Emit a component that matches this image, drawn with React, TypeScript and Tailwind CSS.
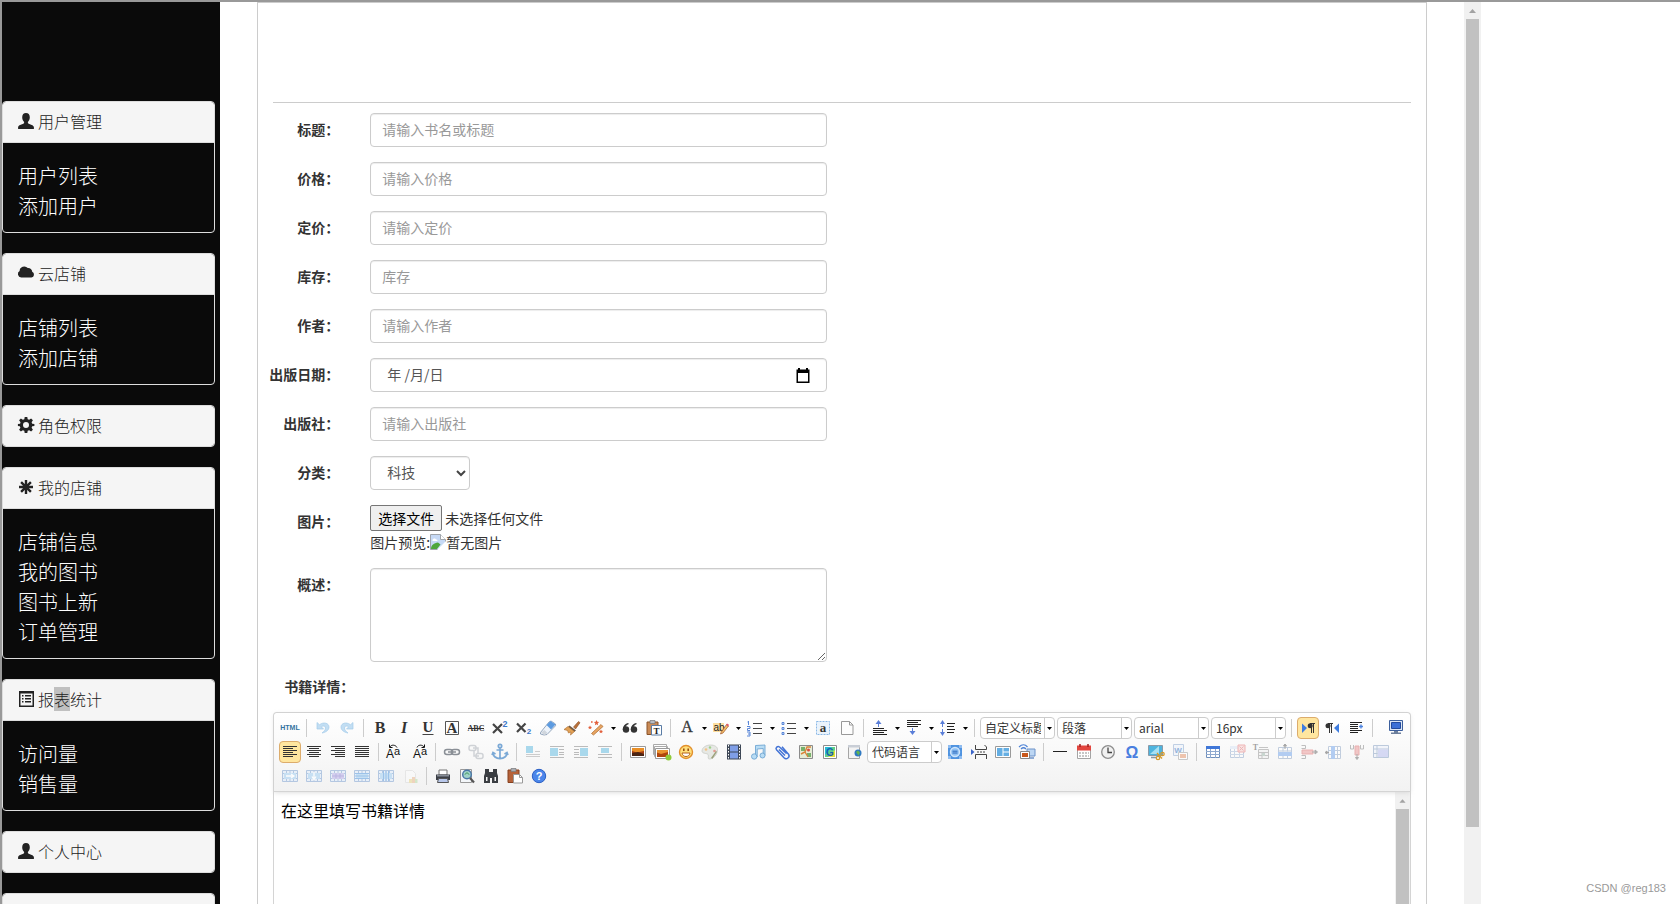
import React, { useState } from 'react';

type GlyphName = 'user' | 'cloud' | 'cog' | 'asterisk' | 'listAlt';

const glyphs: Record<GlyphName, React.ReactNode> = {
  user: (
    <path d="M8 0C5.6 0 4.2 1.5 4.2 4.3c0 2 .8 3.7 1.9 4.7v1.3c-1 .9-5.3 1.6-6 3.7V16h15.800v-2c-.7-2.100-5-2.800-6-3.700V9c1.100-1 1.900-2.700 1.900-4.700C11.800 1.500 10.400 0 8 0z" />
  ),
  cloud: <path d="M3.200 12.500A3.500 3.500 0 0 1 1.600 6 4.700 4.700 0 0 1 9.800 3 3.900 3.900 0 0 1 14.200 6.800 3 3 0 0 1 13.500 12.500z" />,
  cog: (
    <path
      fillRule="evenodd"
      d="M6.700 0h2.600l.4 2.200 1.500.6 1.900-1.300 1.800 1.800-1.300 1.900.6 1.500 2.200.4v1.800l-2.200.4-.6 1.500 1.300 1.900-1.800 1.800-1.900-1.300-1.500.6-.4 2.200H6.700l-.4-2.200-1.500-.6-1.900 1.300-1.800-1.800 1.300-1.900-.6-1.500L-.1 8.900V7.100l2.200-.4.400-1.500L1.100 3.300l1.800-1.800 1.900 1.300 1.500-.6zM8 5a3 3 0 1 0 0 6 3 3 0 0 0 0-6z"
    />
  ),
  asterisk: (
    <g stroke="currentColor" strokeWidth="2.400">
      <path d="M8 1v14M1 8h14M3.100 3.100l9.800 9.800M12.900 3.100l-9.800 9.800" />
    </g>
  ),
  listAlt: (
    <>
      <path fillRule="evenodd" d="M1 0h15v16H1zM2.500 2.500v12h12v-12z" />
      <path d="M4 4h1.500v1.500H4zM4 7h1.500v1.500H4zM4 10h1.500v1.500H4zM7 4h6v1.500H7zM7 7h6v1.500H7zM7 10h6v1.500H7z" />
    </>
  ),
};

const Glyph = ({ name }: { name: GlyphName }) => (
  <svg viewBox="0 0 16 16" className="w-4 h-4 shrink-0 overflow-visible" fill="currentColor">
    {glyphs[name]}
  </svg>
);

interface Menu {
  icon: GlyphName;
  title?: React.ReactNode;
  items: string[];
}

const menus: Menu[] = [
  { icon: 'user', title: '用户管理', items: ['用户列表', '添加用户'] },
  { icon: 'cloud', title: '云店铺', items: ['店铺列表', '添加店铺'] },
  { icon: 'cog', title: '角色权限', items: [] },
  { icon: 'asterisk', title: '我的店铺', items: ['店铺信息', '我的图书', '图书上新', '订单管理'] },
  {
    icon: 'listAlt',
    title: (
      <>
        报<mark className="bg-[#c0c0c0] text-inherit">表</mark>统计
      </>
    ),
    items: ['访问量', '销售量'],
  },
  { icon: 'user', title: '个人中心', items: [] },
  { icon: 'cog', items: [] },
];

const Sidebar = () => (
  <aside className="w-[218px] shrink-0 bg-[#0a0a0a] pt-[99px] pr-[5px] overflow-hidden font-light">
    {menus.map((menu, i) => (
      <div key={i} className="mb-5 border border-[#ddd] rounded overflow-hidden">
        <h3 className="h-10 px-[15px] pb-[3px] flex items-center gap-1 bg-[#f5f5f5] text-[#222] text-base leading-[18px]">
          <Glyph name={menu.icon} />
          {menu.title && <span>{menu.title}</span>}
        </h3>
        {menu.items.length > 0 && (
          <ul className="border-t border-[#ddd] px-[15px] pt-[18px] pb-[11px] text-xl leading-[30px] text-white">
            {menu.items.map((item) => (
              <li key={item}>
                <a href="#">{item}</a>
              </li>
            ))}
          </ul>
        )}
      </div>
    ))}
  </aside>
);

// ---- toolbar icons, all on a 20x20 grid ----

const T = (props: React.SVGProps<SVGTextElement>) => <text textAnchor="middle" fill="#333" {...props} />;

const serif = '"Liberation Serif", serif';
const sans = '"Liberation Sans", sans-serif';

const Grid = ({ x = 3, y = 4, head = '#cfe0f5' }: { x?: number; y?: number; head?: string }) => (
  <>
    <path d={`M${x + 0.5} ${y + 0.5}h13v11h-13z`} fill="#fff" stroke="#6f8fbc" />
    <path d={`M${x} ${y}h14v3h-14z`} fill={head} />
    <path d={`M${x} ${y + 5.5}h14M${x} ${y + 8.5}h14M${x + 4.5} ${y + 3}v9M${x + 9.5} ${y + 3}v9`} stroke="#8fa9cf" />
  </>
);

const Floated = ({ x, center }: { x: number; center?: boolean }) => (
  <>
    <path d="M3 4.500h14M3 15.500h14" stroke="#bbb" />
    {!center && <path d={x < 8 ? 'M12 7.500h5M12 10.500h5M12 12.500h5' : 'M3 7.500h5M3 10.500h5M3 12.500h5'} stroke="#bbb" />}
    {center && <path d="M3 12.500h14" stroke="#bbb" />}
    <path d={`M${x} 6h8v${center ? 5 : 8}h-8z`} fill="#a9d8ec" />
  </>
);

const FilmTable = ({ children, tone = '#b8d9f3' }: { children?: React.ReactNode; tone?: string }) => (
  <g opacity=".75">
    <path d="M2.500 4.500h15v11h-15z" fill="#e4eefa" stroke="#9fb9db" />
    <path d="M2.500 7.500h15M2.500 12.500h15M6.500 4.500v11M13.500 4.500v11M10 4.500v11" stroke="#9fb9db" />
    <path d="M4 7h12v6H4z" fill={tone} />
    {children}
  </g>
);

const icons: Record<string, React.ReactNode> = {
  html: (
    <T x="10" y="12" fontSize="7" fontWeight="bold" fontFamily={sans} fill="#33729f">
      HTML
    </T>
  ),
  undo: <path d="M4 4.500v6.500h6.500L8.300 8.800c2-1.500 4.200-.8 4.200 1.200 0 1.800-1.600 3.600-3.500 5 4.500-.8 7-3.200 7-6 0-3.800-5.200-5.500-9.500-2.300z" fill="#c2def3" stroke="#a5cbe9" strokeWidth=".7" />,
  redo: <path d="M16 4.500v6.500H9.500l2.200-2.200C9.700 7.300 7.500 8 7.500 10c0 1.800 1.600 3.600 3.500 5-4.500-.8-7-3.200-7-6 0-3.800 5.200-5.500 9.500-2.300z" fill="#c2def3" stroke="#a5cbe9" strokeWidth=".7" />,
  bold: <T x="10" y="15" fontSize="16" fontWeight="bold" fontFamily={serif}>B</T>,
  italic: <T x="10" y="15" fontSize="16" fontWeight="bold" fontStyle="italic" fontFamily={serif}>I</T>,
  underline: (
    <>
      <T x="10" y="14" fontSize="15" fontWeight="bold" fontFamily={serif}>U</T>
      <path d="M4.500 16.500h11" stroke="#444" />
    </>
  ),
  border: (
    <>
      <path d="M3.500 3.500h13v13h-13z" fill="none" stroke="#555" />
      <T x="10" y="15" fontSize="15" fontWeight="bold" fontFamily={serif}>A</T>
    </>
  ),
  strike: (
    <>
      <T x="10" y="13" fontSize="8" fontWeight="bold" fontFamily={serif}>ABC</T>
      <path d="M2 10.500h16" stroke="#333" />
    </>
  ),
  sup: (
    <>
      <path d="M3 6l9 9M12 6l-9 9" stroke="#444" strokeWidth="2.200" />
      <T x="15" y="9" fontSize="9" fontWeight="bold" fontFamily={sans} fill="#3d78c9">2</T>
    </>
  ),
  sub: (
    <>
      <path d="M3 5.500l8.500 8.500M11.500 5.500L3 14" stroke="#444" strokeWidth="2.200" />
      <T x="15" y="16" fontSize="8" fontWeight="bold" fontFamily={sans} fill="#3d78c9">2</T>
    </>
  ),
  eraser: (
    <>
      <path d="M2.500 14.500L11 4l2-1 4.500 3v1.800L9 16.500l-3 .5-3.500-1z" fill="#eef4fb" stroke="#7f93ad" strokeWidth=".8" />
      <path d="M8.500 7L12.500 3l5 3.500-4.500 5z" fill="#5d9be0" />
      <path d="M3 14.500L6.500 12l3 3-3 2z" fill="#d0d6dd" />
    </>
  ),
  brush: (
    <>
      <path d="M11.500 9L16.500 3.500l1.500 1.200L13.500 11z" fill="#b9713a" stroke="#8a4c20" strokeWidth=".6" />
      <path d="M7.500 7.500l6.500 5-2 1.500-6-5z" fill="#6b5a49" />
      <path d="M6 8.500L2 11.500l3.500 1 1 2.500 2.500-1-.5 3 4-3.500z" fill="#e2a256" stroke="#a8662a" strokeWidth=".6" />
    </>
  ),
  wand: (
    <>
      <path d="M5.500 15.500l9.500-9 2 2-9.500 8.500z" fill="#e9a663" stroke="#a8662a" strokeWidth=".7" />
      <path d="M10.500 2l.8 1.800 1.900.3-1.500 1.200.4 1.900-1.600-1-1.600 1 .4-1.900L7.800 4.100l1.900-.3zM4 7.500l.6 1.300 1.400.2-1 .9.300 1.400L4 10.600l-1.300.7.300-1.400-1-.9 1.400-.2zM15 11.500l.6 1.300 1.400.2-1 .9.300 1.400-1.300-.7-1.300.7.300-1.400-1-.9 1.400-.2zM5 3.200h1.600v1.600H5z" fill="#e2603c" />
    </>
  ),
  quote: (
    <g fill="#333">
      <circle cx="6" cy="11.500" r="3.200" />
      <circle cx="14" cy="11.500" r="3.200" />
      <path d="M2.800 12c0-4 2-6.500 5.700-7v1.200C6 7 5.200 9 5.300 11zM10.800 12c0-4 2-6.500 5.700-7v1.200c-2.500.8-3.300 2.800-3.200 4.800z" />
    </g>
  ),
  pasteplain: (
    <>
      <path d="M3 4h11v12.500H3z" fill="#c98a55" stroke="#8a5328" />
      <path d="M6 2.500h5v3H6z" fill="#b8bcc2" stroke="#777" strokeWidth=".7" />
      <path d="M7.500 7.500h10v9.500h-10z" fill="#fff" stroke="#5a7ca5" />
      <T x="12.500" y="15.500" fontSize="9" fontWeight="bold" fontFamily={serif} fill="#222">T</T>
    </>
  ),
  forecolor: <T x="10" y="14" fontSize="16" fontFamily={serif} stroke="#444" strokeWidth=".3">A</T>,
  backcolor: (
    <>
      <path d="M2 5h11v9H2z" fill="#fddfa0" />
      <T x="8" y="13" fontSize="10" fontFamily={sans} fill="#222">ab</T>
      <path d="M10 14.500l5.500-8 2 1.500-5.500 7-2.500 1z" fill="#f3c069" stroke="#a0552a" strokeWidth=".7" />
      <path d="M15 7l1-1.500 2 1.300-1 1.700z" fill="#e05a6a" />
    </>
  ),
  ol: (
    <>
      <path d="M8 5.500h9M8 10.500h9M8 15.500h9" stroke="#444" />
      <path d="M3.500 3v4M2.500 4h1M2 8.500h3v2H2.500v2H5M2 14h3v4H2M3 16h2" stroke="#5a87d8" fill="none" />
    </>
  ),
  ul: (
    <>
      <path d="M8 5.500h9M8 10.500h9M8 15.500h9" stroke="#444" />
      <path d="M3 4.500h2v2H3zM3 9.500h2v2H3zM3 14.500h2v2H3z" fill="#cfe0fb" stroke="#5a87d8" />
    </>
  ),
  selectall: (
    <>
      <path d="M3.500 3.500h13v13h-13z" fill="#eaf3fc" stroke="#8ab8e6" strokeDasharray="2 1" />
      <T x="10" y="14" fontSize="13" fontWeight="bold" fontFamily={serif}>a</T>
    </>
  ),
  cleardoc: (
    <>
      <path d="M4.500 3.500h8l3.500 3.500v9.500H4.500z" fill="#fdfdfd" stroke="#999" />
      <path d="M12.500 3.500V7H16" fill="none" stroke="#999" />
    </>
  ),
  rowtop: (
    <>
      <path d="M3 10.500h11M3 12.500h14M3 14.500h11M3 16.500h14" stroke="#222" />
      <path d="M8.500 9V5" stroke="#5a7ed8" />
      <path d="M5.500 6l3-4 3 4z" fill="#5a7ed8" />
    </>
  ),
  rowbottom: (
    <>
      <path d="M3 2.500h14M3 4.500h11M3 6.500h14M3 8.500h11" stroke="#222" />
      <path d="M8.500 10v4" stroke="#5a7ed8" />
      <path d="M5.500 13l3 4 3-4z" fill="#5a7ed8" />
    </>
  ),
  lineheight: (
    <>
      <path d="M9 5.500h8M9 8.500h7M9 11.500h8M9 14.500h7" stroke="#222" />
      <path d="M4.500 5v11" stroke="#5a7ed8" strokeDasharray="4 2" />
      <path d="M2 6l2.500-4L7 6zM2 14l2.500 4L7 14z" fill="#5a7ed8" />
    </>
  ),
  ltr: (
    <>
      <path d="M4 5.500l5 4.500-5 5z" fill="#3f7de0" />
      <path d="M17 5.500h-5M13.500 5v10M15.500 5v10" stroke="#333" />
      <circle cx="12.200" cy="7.700" r="2.500" fill="#333" />
    </>
  ),
  rtl: (
    <>
      <path d="M17 5.500l-5 4.500 5 5z" fill="#3f7de0" />
      <path d="M11 5.500H6M7.500 5v10M9.500 5v10" stroke="#333" />
      <circle cx="6" cy="7.700" r="2.500" fill="#333" />
    </>
  ),
  indent: (
    <>
      <path d="M4 4.500h12M4 6.500h8M4 8.500h8M4 10.500h8M4 12.500h12M4 14.500h8" stroke="#222" />
      <path d="M13 8.500h4M15 6.500v4" stroke="#4f85e0" strokeWidth="1.400" />
    </>
  ),
  fullscreen: (
    <>
      <path d="M3.500 3.500h13v10h-13z" fill="#dce6f5" stroke="#3c5f9d" />
      <path d="M5.500 5.500h9v6h-9z" fill="#3b6fd6" stroke="#234a9c" />
      <path d="M8 14h4v1.500h3V17H5v-1.500h3z" fill="#6d7f9c" />
    </>
  ),
  left: <path d="M3 4.500h14M3 6.500h10M3 8.500h14M3 10.500h10M3 12.500h14M3 14.500h10" stroke="#333" />,
  center: <path d="M3 4.500h14M5 6.500h10M3 8.500h14M5 10.500h10M3 12.500h14M5 14.500h10" stroke="#333" />,
  right: <path d="M3 4.500h14M7 6.500h10M3 8.500h14M7 10.500h10M3 12.500h14M7 14.500h10" stroke="#333" />,
  justify: <path d="M3 4.500h14M3 6.500h14M3 8.500h14M3 10.500h14M3 12.500h14M3 14.500h14" stroke="#333" />,
  upper: (
    <>
      <T x="5" y="16" fontSize="12" fontFamily={sans} fill="#111">A</T>
      <T x="12" y="13" fontSize="11" fontFamily={sans} fill="#111">a</T>
      <path d="M5 5c1-2.500 5.500-2.500 7 .5M4.500 2.500v3h3" fill="none" stroke="#111" />
    </>
  ),
  lower: (
    <>
      <T x="8" y="16" fontSize="12" fontFamily={sans} fill="#111">A</T>
      <T x="15" y="13" fontSize="11" fontFamily={sans} fill="#111">a</T>
      <path d="M8 5.500c1-3 5.500-3 7-.5M15.500 2.500v3h-3" fill="none" stroke="#111" />
    </>
  ),
  link: (
    <g fill="none" stroke="#8a8f96" strokeWidth="1.500">
      <rect x="2.500" y="7.500" width="8" height="5" rx="2.500" />
      <rect x="9.500" y="7.500" width="8" height="5" rx="2.500" />
      <path d="M6 10h8" />
    </g>
  ),
  unlink: (
    <g fill="none" stroke="#cfd2d6" strokeWidth="1.500">
      <rect x="3" y="3.500" width="7" height="5" rx="2" />
      <rect x="10" y="11.500" width="7" height="5" rx="2" />
      <path d="M7 6h5v5M8 9v5h5" />
    </g>
  ),
  anchor: (
    <g fill="none" stroke="#7ba9d6" strokeWidth="1.700">
      <circle cx="10" cy="4" r="1.700" />
      <path d="M10 6v11M6.500 8h7M2.800 11c.7 4 3.500 5.500 7.200 5.700 3.700-.2 6.500-1.700 7.200-5.700M2 13l1-2.500L5.500 12M18 13l-1-2.500-2.500 1.500" />
    </g>
  ),
  imgnone: (
    <>
      <path d="M3 4h7v7H3z" fill="#a9d8ec" />
      <path d="M3 12.500h14M3 14.500h14M12 9.500h5" stroke="#ccc" />
    </>
  ),
  imgleft: <Floated x={3} />,
  imgright: <Floated x={9} />,
  imgcenter: <Floated x={6} center />,
  image: (
    <>
      <path d="M2.500 4.500h15v11h-15z" fill="#fff" stroke="#9a9a9a" />
      <path d="M4 6h12v8H4z" fill="#a53c10" />
      <path d="M4 6h12v3l-7 1.500L4 9z" fill="#e98e25" />
      <path d="M4 11l6-1 6 2v2H4z" fill="#4a2413" />
    </>
  ),
  images: (
    <>
      <path d="M1.500 2.500h13v10h-13zM2.500 4.500h13v10h-13z" fill="#fff" stroke="#aaa" />
      <path d="M3.500 6.500h14v10h-14z" fill="#fff" stroke="#9a9a9a" />
      <path d="M5 8h11v7H5z" fill="#b1460f" />
      <path d="M5 8h11v2l-7 2-4-1.500z" fill="#ea9430" />
      <circle cx="16.500" cy="15.500" r="3" fill="#8fcb3a" />
    </>
  ),
  emotion: (
    <>
      <circle cx="10" cy="10" r="6.500" fill="#ffdf7a" stroke="#e2902d" strokeWidth="1.400" />
      <path d="M7 6.500h1.600v2.500H7zM11.400 6.500H13v2.500h-1.600z" fill="#9c4e12" />
      <path d="M6 11h8c-.5 2.500-2 3.500-4 3.500S6.500 13.500 6 11z" fill="#fff" stroke="#b5631d" />
    </>
  ),
  scrawl: (
    <>
      <path d="M2 9c0-3.500 4-6 8.500-6 4 0 7 1.700 7 4.500 0 5-4 9.500-8 9.500-2.500 0-.5-3-1.500-4.500S2 12 2 9z" fill="#e6e8e4" stroke="#c3c6c0" strokeWidth=".7" />
      <circle cx="6" cy="7.500" r="1.300" fill="#f1c48a" />
      <circle cx="10" cy="5.500" r="1.200" fill="#9fd08c" />
      <circle cx="14.500" cy="9" r="1.300" fill="#e49a92" />
      <path d="M11 16l5-7 1 .8-4.500 7z" fill="#9ba07a" />
    </>
  ),
  video: (
    <>
      <path d="M3 2.500h14v15H3z" fill="#3d4756" />
      <path d="M6 3.500h8v6H6zM6 10.500h8v6H6z" fill="#7f9ee6" />
      <path d="M4.500 3v14M15.500 3v14" stroke="#fff" strokeDasharray="1.500 1.500" />
    </>
  ),
  music: (
    <g fill="#b8dcf4" stroke="#6fa6d2" strokeWidth=".9">
      <path d="M7.500 3.500L17 3v10.500h-1.800V6.500L9.200 7v8H7.500z" />
      <circle cx="6.200" cy="14.500" r="2.700" />
      <circle cx="14.500" cy="13.500" r="2.500" />
    </g>
  ),
  attach: (
    <path d="M14.500 11.500L7.500 5C5.700 3.500 3 5.800 4.500 7.800l7.500 8c2.500 2.500 6.500-.8 4.500-3.500L10 4.800M13 13.500L7 7.500" fill="none" stroke="#4474d6" strokeWidth="1.500" />
  ),
  map: (
    <>
      <path d="M3.500 3.500h13v13h-13z" fill="#e6edd6" stroke="#8c8c8c" />
      <path d="M5 5h4v4H5zM11 11h4v4h-4z" fill="#76b06c" />
      <path d="M5 12l4-2 2-5h4M9 10l3 5" fill="none" stroke="#d98438" strokeWidth="1.400" />
      <circle cx="12.500" cy="8" r="1.500" fill="#d94b3b" />
    </>
  ),
  gmap: (
    <>
      <path d="M3.500 3.500h13v13h-13z" fill="#fff" stroke="#8c8c8c" />
      <path d="M5 5h10v10H5z" fill="#5fd08a" />
      <path d="M5 5h7l-7 8z" fill="#27bcd6" />
      <path d="M15 8v7H8z" fill="#e8e03c" />
      <T x="10" y="14" fontSize="10" fontWeight="bold" fontFamily={sans} fill="#155fae">G</T>
    </>
  ),
  insertframe: (
    <>
      <path d="M4.500 3.500h11v13h-11z" fill="#f3f3f3" stroke="#a5a5a5" />
      <path d="M4 3h12v2.500H4z" fill="#c9ced6" />
      <circle cx="14" cy="11" r="3.500" fill="#2f79c2" />
      <path d="M12 10l2-1.500 2 2-1.500 3z" fill="#62b54f" />
    </>
  ),
  webapp: (
    <>
      <rect x="3" y="3" width="14" height="14" rx="2" fill="#4f93e0" />
      <path d="M3 3h3v3H3zM14 3h3v3h-3zM3 14h3v3H3zM14 14h3v3h-3z" fill="#8fbcf0" />
      <circle cx="10" cy="10" r="4.500" fill="#8fc0f3" stroke="#cfe5fb" strokeWidth="1.400" />
      <path d="M7.500 9.200h5M7.500 11h5" stroke="#2b68bd" />
    </>
  ),
  pagebreak: (
    <>
      <path d="M6.500 3v4.500h11V5l-2-2M6.500 17v-4.500h11V17" fill="none" stroke="#444" />
      <path d="M8 10h9" stroke="#444" strokeDasharray="2 1" />
      <path d="M2 7l3.500 3L2 13z" fill="#3d66c9" />
    </>
  ),
  template: (
    <>
      <path d="M2.500 4.500h15v11h-15z" fill="#fff" stroke="#9a9a9a" />
      <path d="M4 6h5.500v8H4zM10.500 6H16v3.500h-5.500zM10.500 10.500H16V14h-5.500z" fill="#64aee3" />
    </>
  ),
  background: (
    <>
      <path d="M10 7h8v7h-8z" fill="#bcd6f3" stroke="#6d92c8" />
      <path d="M11 16h6" stroke="#6d92c8" strokeWidth="1.500" />
      <path d="M2 5c3-3 6-3 8.500 0M4 7c1.500-1.500 3.500-1.500 5 0" fill="none" stroke="#4d82d6" strokeWidth="1.200" />
      <path d="M3.500 9.500h9v7h-9z" fill="#fff" stroke="#888" />
      <path d="M5 11h6v4H5z" fill="#c9581c" />
    </>
  ),
  hr: <path d="M3 9.500h14" stroke="#222" />,
  date: (
    <>
      <path d="M3.500 4.500h13v12h-13z" fill="#fff" stroke="#a4a4a4" />
      <path d="M3 3.500h14v5H3z" fill="#e2463f" />
      <path d="M6 2v3M14 2v3" stroke="#9d1f1f" strokeWidth="1.500" />
      <path d="M5 11h10M5 14h10" stroke="#b5b5b5" strokeWidth="1.600" strokeDasharray="2 1" />
    </>
  ),
  time: (
    <>
      <circle cx="10" cy="10" r="6.300" fill="#f1f1f1" stroke="#8d8d8d" strokeWidth="1.300" />
      <path d="M10 5.500V10.500h4" fill="none" stroke="#444" strokeWidth="1.300" />
    </>
  ),
  spechars: <T x="10" y="16" fontSize="16" fontWeight="bold" fontFamily={sans} fill="#4a7fe0">Ω</T>,
  snapscreen: (
    <>
      <path d="M2.500 3.500h14v10h-14z" fill="#4eb4de" stroke="#8a9aa8" />
      <path d="M4 12l9-8v8z" fill="#a7e0f3" />
      <path d="M5 15.500h6" stroke="#8a9aa8" strokeWidth="1.500" />
      <g fill="none" stroke="#d59a2a" strokeWidth="1.300">
        <circle cx="12" cy="16" r="1.700" />
        <circle cx="16.500" cy="12" r="1.700" />
        <path d="M11 11l5 5.500M17 10" />
      </g>
    </>
  ),
  wordimage: (
    <g opacity=".6">
      <path d="M3.500 2.500h10v11h-10z" fill="#eef4fc" stroke="#9bb4d6" />
      <T x="8" y="10.500" fontSize="8" fontWeight="bold" fontFamily={sans} fill="#4f84c9">W</T>
      <path d="M8.500 10.500h9v7h-9z" fill="#fff" stroke="#aaa" />
      <path d="M10 12h6v4h-6z" fill="#e9a27c" />
    </g>
  ),
  table: <Grid head="#4077d8" />,
  deletetable: (
    <g opacity=".4">
      <Grid />
      <path d="M11 3h7v7h-7z" fill="#f6c1c1" stroke="#e05050" />
      <path d="M12.500 4.500l4 4M16.500 4.500l-4 4" stroke="#e05050" />
    </g>
  ),
  paratable: (
    <g opacity=".45">
      <T x="4.500" y="8" fontSize="8" fontWeight="bold" fontFamily={serif}>T</T>
      <path d="M7.500 7.500h10v9h-10zM7.500 10.500h10M7.500 13.500h10M11 10.500v6M8 5.500h9" fill="#eee" stroke="#888" />
      <path d="M11 11h3v3h-3z" fill="#8fae9f" />
    </g>
  ),
  insertrow: (
    <g opacity=".5">
      <path d="M3.500 5.500h13v11h-13zM3.500 9h13M8 5.500v4M12.500 5.500v4M8 13v4M12.500 13v4" fill="#fff" stroke="#8ba3c4" />
      <path d="M3 10h14v4H3z" fill="#6fa2ec" />
      <path d="M10 7V3M8.500 4L10 2l1.500 2z" stroke="#555" fill="#555" />
    </g>
  ),
  deleterow: (
    <g opacity=".45">
      <path d="M2.500 3.500h4v3h-4M2.500 16.500h4v-3h-4" fill="none" stroke="#777" />
      <path d="M3 8h11v4H3z" fill="#e98a8a" stroke="#d65a5a" />
      <path d="M13 10h4M16 8l2.500 2L16 12z" stroke="#555" fill="#555" />
    </g>
  ),
  insertcol: (
    <g opacity=".5">
      <path d="M5.500 4.500h12v12h-12zM5.500 8.500h12M5.500 12.500h12M14.500 4.500v12" fill="#fff" stroke="#8ba3c4" />
      <path d="M8 4h4v13H8z" fill="#6fa2ec" />
      <path d="M6 10.500H3M4 9l-2 1.500L4 12z" stroke="#555" fill="#555" />
    </g>
  ),
  deletecol: (
    <g opacity=".45">
      <path d="M3.500 3v4h3V3M16.500 3v4h-3V3" fill="none" stroke="#777" />
      <path d="M8 4h4v9H8z" fill="#e98a8a" stroke="#d65a5a" />
      <path d="M10 12v4M8.500 15.500L10 17.500l1.500-2z" stroke="#555" fill="#555" />
    </g>
  ),
  mergecells: (
    <g opacity=".55">
      <path d="M2.500 3.500h15v12h-15zM2.500 7h15M6 3.500v12M2.500 11.500h4" fill="#eef1fb" stroke="#8ba3c4" />
      <path d="M7 7.500h10v7.500H7z" fill="#b9bff0" />
    </g>
  ),
  mergeright: (
    <FilmTable>
      <path d="M6 10h7M11 8l3 2-3 2" fill="none" stroke="#fff" strokeWidth="1.300" />
    </FilmTable>
  ),
  mergedown: (
    <FilmTable>
      <path d="M10 6v6M8 10.500l2 3 2-3" fill="none" stroke="#fff" strokeWidth="1.300" />
    </FilmTable>
  ),
  splitcells: (
    <FilmTable tone="#c8c3ec">
      <path d="M4 10h12M8 7.500v5M12 7.500v5" stroke="#a79fdc" />
    </FilmTable>
  ),
  splitrows: (
    <FilmTable>
      <path d="M3 7.500h14M3 12.500h14M3 10h14" stroke="#7fb2e6" />
    </FilmTable>
  ),
  splitcols: (
    <FilmTable>
      <path d="M7.500 5v10M10 5v10M12.500 5v10" stroke="#7fb2e6" />
    </FilmTable>
  ),
  charts: (
    <g opacity=".35">
      <path d="M5.500 4.500h7l3 3v9h-10z" fill="#fff" stroke="#ccc" />
      <path d="M9 13h3v4H9z" fill="#e3c653" />
      <path d="M12 11h3v6h-3z" fill="#e59a5b" />
      <path d="M15 13h2.500v4H15z" fill="#9ad07f" />
    </g>
  ),
  print: (
    <>
      <path d="M6 4h8v5H6z" fill="#fff" stroke="#777" />
      <path d="M3 8.500h14V14H3z" fill="#3b3f46" />
      <path d="M4 9h12v1.500H4z" fill="#878d97" />
      <path d="M5.500 12.500h9l1 4h-11z" fill="#b8c7ea" stroke="#555" />
    </>
  ),
  preview: (
    <>
      <path d="M3.500 3.500h11v13h-11z" fill="#f3f6f9" stroke="#999" />
      <circle cx="10" cy="8.500" r="4.300" fill="#9fd2c8" stroke="#4b78a8" strokeWidth="1.500" />
      <path d="M13 12l4 4.500" stroke="#555" strokeWidth="2.200" />
      <path d="M8 8.500c1-2 3-2 4 0" fill="none" stroke="#2f8f4e" />
    </>
  ),
  search: (
    <path d="M4 3h4v3h4V3h4v4l1 3v7h-6v-5H9v5H3v-7l1-3zM5 11v4h1.500v-4zM13.500 11v4H15v-4z" fill="#3a3d42" fillRule="evenodd" />
  ),
  paste: (
    <>
      <path d="M3 4h11v12.500H3z" fill="#b5623a" stroke="#86401f" />
      <path d="M6 2.500h5v3H6z" fill="#a9aeb6" stroke="#777" strokeWidth=".7" />
      <path d="M8.500 8.500h6l3 3v5.500h-9z" fill="#fff" stroke="#999" />
      <path d="M14.500 8.500v3h3" fill="none" stroke="#999" />
    </>
  ),
  help: (
    <>
      <circle cx="10" cy="10" r="6.700" fill="#4b86ea" stroke="#2b5fc4" />
      <T x="10" y="14" fontSize="11" fontWeight="bold" fontFamily={sans} fill="#fff">?</T>
    </>
  ),
};

const Caret = () => (
  <svg viewBox="0 0 5 3" className="w-[5px] h-[3px] shrink-0">
    <path d="M0 0h5L2.500 3z" />
  </svg>
);

const Tool = ({ name, active }: { name: string; active?: boolean }) => (
  <button
    type="button"
    title={name}
    className={`w-[22px] h-[22px] m-px shrink-0 rounded-sm border ${
      active ? 'bg-[#ffe69f] border-[#dcac6c]' : 'border-transparent'
    }`}
  >
    <svg viewBox="0 0 20 20" className="w-5 h-5 overflow-visible">
      {icons[name]}
    </svg>
  </button>
);

const Drop = ({ name }: { name: string }) => (
  <div className="flex items-center shrink-0">
    <Tool name={name} />
    <button type="button" title={`${name} menu`} className="w-[10px] h-[22px] flex items-center justify-center">
      <Caret />
    </button>
  </div>
);

const Sep = () => <span className="w-px h-[18px] mx-1 shrink-0 bg-[#ccc]" />;

const Combo = ({ label, value }: { label: string; value: string }) => (
  <div className="relative w-[75px] h-[22px] m-px shrink-0 flex bg-white border border-[#ccc] rounded-sm">
    <select
      aria-label={label}
      className="w-full pl-1 pr-[13px] appearance-none overflow-hidden text-xs leading-5 text-[#333] outline-none"
    >
      <option>{value}</option>
    </select>
    <span className="absolute right-0 inset-y-0 w-[10px] border-l border-[#ccc] flex items-center justify-center pointer-events-none">
      <Caret />
    </span>
  </div>
);

// "|" separator, "name+" icon with a menu arrow, "name*" pressed, "=text" combo box, ">name" pushed right
const toolbar = [
  'html | undo redo | bold italic underline border strike sup sub eraser brush wand+ quote pasteplain | forecolor+ backcolor+ ol+ ul+ selectall cleardoc | rowtop+ rowbottom+ lineheight+ | =自定义标题 =段落 =arial =16px | ltr* rtl indent | >fullscreen',
  'left* center right justify | upper lower | link unlink anchor | imgnone imgleft imgright imgcenter | image images emotion scrawl video music attach map gmap insertframe =代码语言 webapp pagebreak template background | hr date time spechars snapscreen wordimage | table deletetable paratable insertrow deleterow insertcol deletecol mergecells',
  'mergeright mergedown splitcells splitrows splitcols charts | print preview search paste help',
];

const renderTool = (token: string, key: number) => {
  if (token === '|') return <Sep key={key} />;
  if (token[0] === '=') return <Combo key={key} label={token.slice(1)} value={token.slice(1)} />;
  if (token[0] === '>')
    return (
      <div key={key} className="ml-auto">
        <Tool name={token.slice(1)} />
      </div>
    );
  if (token.endsWith('+')) return <Drop key={key} name={token.slice(0, -1)} />;
  if (token.endsWith('*')) return <Tool key={key} name={token.slice(0, -1)} active />;
  return <Tool key={key} name={token} />;
};

const ScrollArrow = () => (
  <svg viewBox="0 0 17 17" className="w-full h-[17px] shrink-0">
    <path d="M5 11h7L8.500 7z" fill="#a3a3a3" />
  </svg>
);

const Editor = () => {
  const [content, setContent] = useState('在这里填写书籍详情');

  return (
    <div className="mx-[15px] flex-1 flex flex-col border border-b-0 border-[#d4d4d4] rounded-t">
      <div className="relative pl-1 pr-[2px] py-[3px] border-b border-[#d4d4d4] rounded-t bg-linear-to-b from-white to-[#f2f2f2] shadow-[0_1px_4px_rgba(204,204,204,0.6)]">
        {toolbar.map((row, i) => (
          <div key={i} className="h-6 flex items-center">
            {row.split(' ').map(renderTool)}
          </div>
        ))}
      </div>
      <div className="flex-1 flex">
        <textarea
          aria-label="书籍详情"
          value={content}
          onChange={(e) => setContent(e.target.value)}
          className="flex-1 px-[7px] pt-[6px] resize-none outline-none overflow-hidden text-base leading-6 text-black"
        />
        <div className="w-[15px] flex flex-col bg-[#f1f1f1]">
          <ScrollArrow />
          <div className="flex-1 mx-px bg-[#c1c1c1]" />
        </div>
      </div>
    </div>
  );
};

const control =
  'border border-[#ccc] rounded bg-white text-sm leading-5 text-[#555] placeholder:text-[#999] outline-none shadow-[inset_0_1px_1px_rgba(0,0,0,0.075)]';

const Row = ({ id, label, children }: { id: string; label: string; children: React.ReactNode }) => (
  <div className="flex mb-[15px]">
    <label htmlFor={id} className="w-1/12 shrink-0 pt-[6px] pr-4 flex justify-end whitespace-nowrap font-bold leading-5">
      {label}
    </label>
    <div className="w-5/12 px-[15px]">{children}</div>
  </div>
);

const fields = [
  { id: 'title', label: '标题：', placeholder: '请输入书名或标题' },
  { id: 'price', label: '价格：', placeholder: '请输入价格' },
  { id: 'listPrice', label: '定价：', placeholder: '请输入定价' },
  { id: 'stock', label: '库存：', placeholder: '库存' },
  { id: 'author', label: '作者：', placeholder: '请输入作者' },
  { id: 'pubDate', label: '出版日期：', date: true },
  { id: 'publisher', label: '出版社：', placeholder: '请输入出版社' },
];

const BookForm = () => (
  <form className="flex-1 flex flex-col text-sm text-[#333]">
    {fields.map((f) => (
      <Row key={f.id} id={f.id} label={f.label}>
        {f.date ? (
          <div className={`h-[34px] px-4 flex items-center justify-between ${control}`}>
            <input id={f.id} type="text" defaultValue="年 /月/日" className="flex-1 pb-[2px] outline-none" />
            <button type="button" title="日历">
              <svg viewBox="0 0 14 15" className="w-[14px] h-[15px]">
                <path fillRule="evenodd" d="M2 0h2v1.500h6V0h2v1.500h1.500V15H.5V1.500H2zM2 5v8.500h10V5z" />
              </svg>
            </button>
          </div>
        ) : (
          <input id={f.id} type="text" placeholder={f.placeholder} className={`w-full h-[34px] px-[11px] pb-[2px] block ${control}`} />
        )}
      </Row>
    ))}

    <Row id="category" label="分类：">
      <div className="relative w-[100px]">
        <select id="category" className={`w-full h-[34px] px-4 pb-[2px] block appearance-none ${control}`}>
          <option>科技</option>
          <option>文学</option>
        </select>
        <svg viewBox="0 0 10 7" className="absolute right-1 top-[14px] w-[10px] h-[7px] pointer-events-none">
          <path d="M1 1l4 4 4-4" fill="none" stroke="#444" strokeWidth="2" />
        </svg>
      </div>
    </Row>

    <Row id="picture" label="图片：">
      <div className="flex items-center gap-[3px]">
        <button id="picture" type="button" className="w-[72px] h-[26px] shrink-0 border border-[#767676] rounded-xs bg-[#efefef] text-black">
          选择文件
        </button>
        <span>未选择任何文件</span>
      </div>
      <div className="h-[22px] flex items-center">
        <span>图片预览:</span>
        <svg viewBox="0 0 16 16" className="w-4 h-4 shrink-0">
          <path d="M.5.500h10l5 5v4L9 15.500H.5z" fill="#c6d9f5" stroke="#a0a5ab" />
          <path d="M2.500 6c.5-2 3-2 3.500-.5 1.500-.5 2 1 1 1.500H2.500z" fill="#fff" />
          <path d="M1 15c0-4 3-6 7-6.500l2.500 2L7 15z" fill="#4fa73c" />
          <path d="M10.500.500v5h5" fill="#fff" stroke="#a0a5ab" />
          <path d="M7 16l9-9v3l-6 6z" fill="#fff" />
        </svg>
        <span>暂无图片</span>
      </div>
    </Row>

    <Row id="summary" label="概述：">
      <textarea id="summary" className={`w-full h-[94px] px-3 py-[6px] block ${control}`} />
    </Row>

    <div className="mb-4 w-1/12 pr-px flex justify-end whitespace-nowrap font-bold leading-[19px]">书籍详情：</div>

    <Editor />
  </form>
);

export default function App() {
  return (
    <div className="relative h-screen flex overflow-hidden bg-white border-t-2 border-l-2 border-[#999] font-[Noto_Sans_CJK_SC,sans-serif]">
      <Sidebar />
      <main className="flex-1 flex pl-[37px] pr-[199px]">
        <div className="flex-1 flex flex-col border border-b-0 border-[#ccc]">
          <hr className="mx-[15px] mt-[99px] mb-[10px] border-[#ccc]" />
          <BookForm />
        </div>
        <div className="w-[17px] ml-[37px] shrink-0 flex flex-col bg-[#f1f1f1]">
          <ScrollArrow />
          <div className="h-[808px] mx-[2px] bg-[#c1c1c1]" />
        </div>
      </main>
      <span className="absolute right-[14px] bottom-2 text-[11px] leading-4 text-[#999] font-[Liberation_Sans,sans-serif]">
        CSDN @reg183
      </span>
    </div>
  );
}
